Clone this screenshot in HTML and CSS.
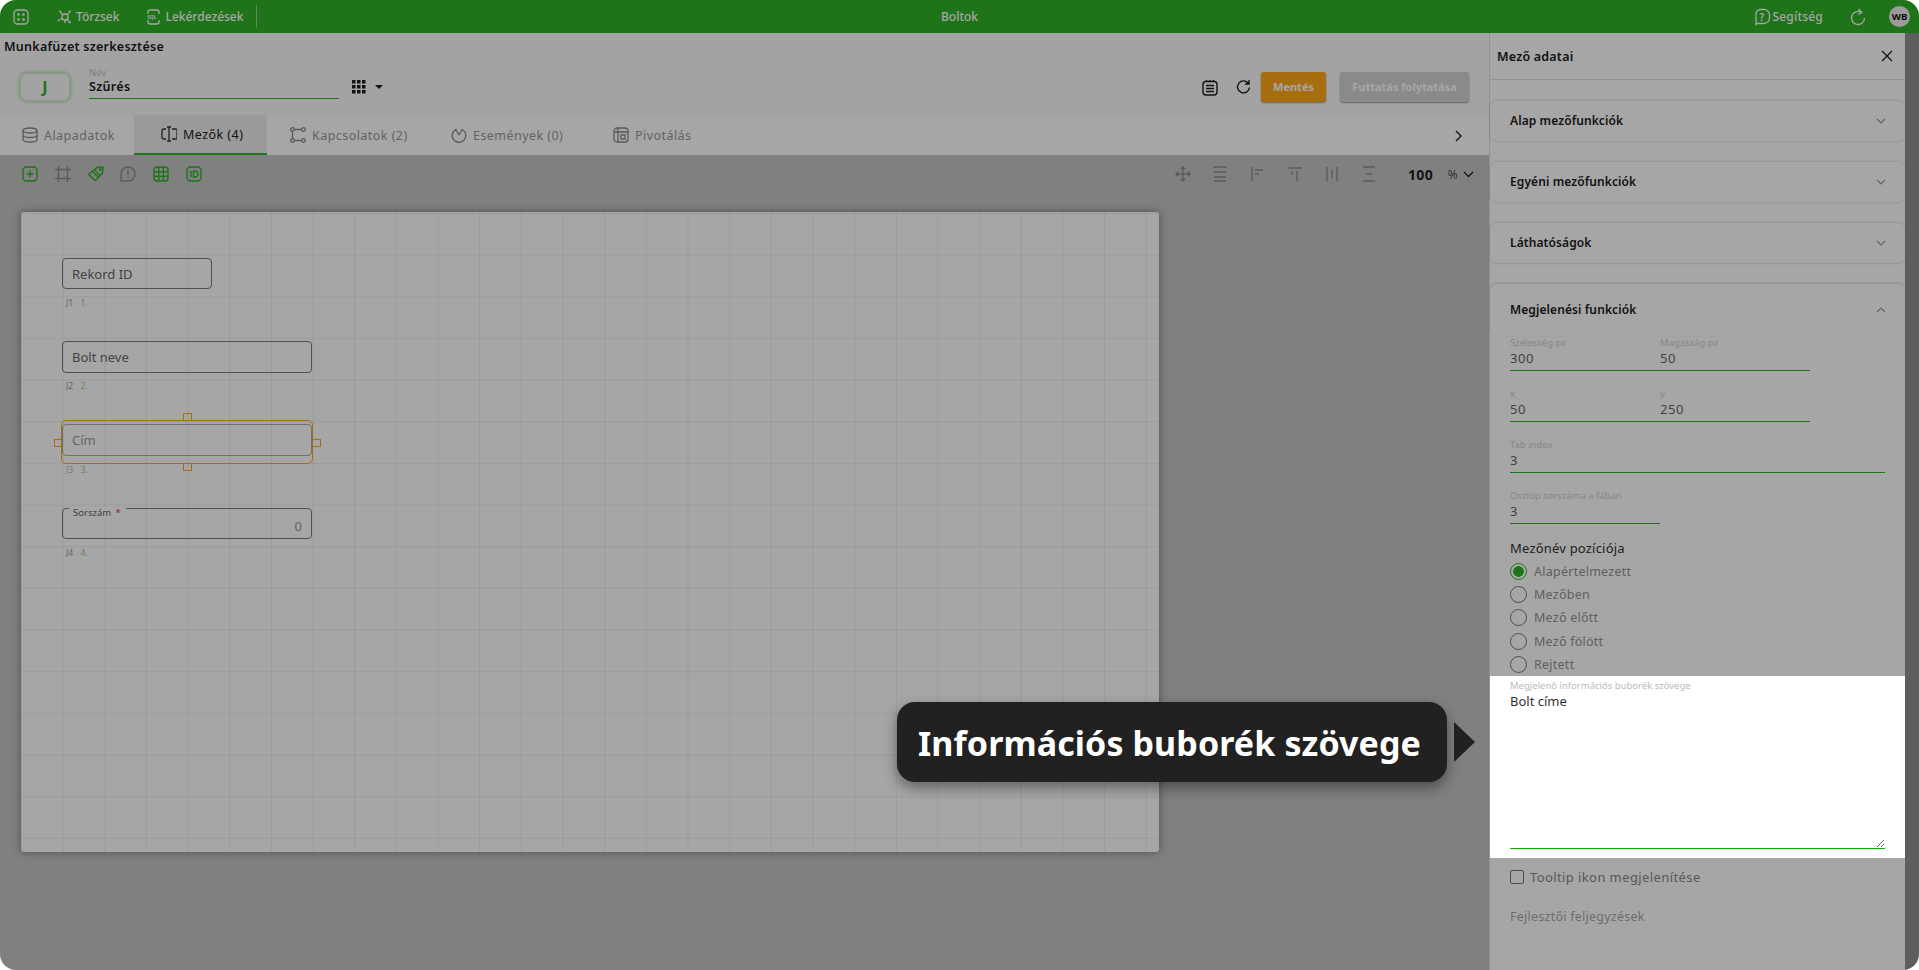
FILE: index.html
```html
<!DOCTYPE html>
<html>
<head>
    <title>Boltok</title>
    <link rel="stylesheet" href="styles.css">
</head>
<body>
<div class="app">
    <!-- top bar -->
    <header class="topbar">
        <svg class="ico-top" width="16" height="16" viewBox="0 0 16 16"><rect x="1" y="1" width="14" height="14" rx="3.5"/><g class="dots"><circle cx="5.5" cy="5.5" r="1.3"/><circle cx="10.5" cy="5.5" r="1.3"/><circle cx="5.5" cy="10.5" r="1.3"/><circle cx="10.5" cy="10.5" r="1.3"/></g></svg>
        <div class="top-item first">
            <svg class="ico-top" width="16" height="16" viewBox="0 0 16 16"><circle cx="8" cy="8" r="3"/><path d="M5.8 5.8 3.5 3M10.2 5.8 12.5 3M5.5 9.5 2.5 11M10.2 10.2 12.5 13M8 11v3"/><g class="dots"><circle cx="3" cy="2.5" r="1"/><circle cx="13" cy="2.5" r="1"/><circle cx="1.5" cy="11.5" r="1"/><circle cx="13" cy="13.5" r="1"/></g></svg>
            <span>Törzsek</span>
        </div>
        <div class="top-item second">
            <svg class="ico-top" width="13" height="16" viewBox="0 0 13 16"><path d="M1 5V3a2 2 0 0 1 2-2h7a2 2 0 0 1 2 2v2M1 11v2a2 2 0 0 0 2 2h7a2 2 0 0 0 2-2v-2"/><text class="sql" x="0.5" y="10">SQL</text></svg>
            <span>Lekérdezések</span>
        </div>
        <div class="top-divider"></div>
        <div class="top-title">Boltok</div>
        <div class="top-right">
            <svg class="ico-top" width="18" height="18" viewBox="0 0 18 18"><path d="M3 16.5V6a4.500 4.500 0 0 1 4.500-4.500h3A5.500 5.500 0 0 1 16.500 7v3a5.500 5.500 0 0 1-5.500 5.500H4z"/><text class="help" x="6.600" y="12.500">?</text></svg>
            <span class="help-text">Segítség</span>
            <svg class="ico-top reload" width="16" height="18" viewBox="0 0 16 18"><path d="M11.500 4.500A6.500 6.500 0 1 0 14.500 10M8.500 1 11.800 4.500 8 6.500"/></svg>
            <div class="avatar">WB</div>
        </div>
    </header>

    <div class="main">
        <section class="editor">
            <div class="edit-head">
                <div class="edit-title">Munkafüzet szerkesztése</div>
                <div class="edit-row">
                    <div class="letter-btn">J</div>
                    <div class="name-field">
                        <div class="name-label">Név</div>
                        <div class="name-value">Szűrés</div>
                    </div>
                    <svg class="grid-ico" width="14" height="14" viewBox="0 0 14 14"><path d="M0 0h3.500v3.500H0zM5 0h3.500v3.500H5zM10 0h3.500v3.500H10zM0 5h3.500v3.500H0zM5 5h3.500v3.500H5zM10 5h3.500v3.500H10zM0 10h3.500v3.500H0zM5 10h3.500v3.500H5zM10 10h3.500v3.500H10z"/></svg>
                    <div class="caret"></div>
                    <div class="edit-actions">
                        <svg class="ico-dark" width="16" height="17" viewBox="0 0 16 17"><rect x="1" y="2.500" width="14" height="13.500" rx="3"/><path d="M4.500 1v2M8 1v2M11.500 1v2M4 6.500h8M4 9.500h8M4 12.500h8"/></svg>
                        <svg class="ico-dark refresh" width="15" height="16" viewBox="0 0 15 16"><path d="M12.500 4.500A6 6 0 1 0 13.500 8.500M13 1v4H9"/></svg>
                        <div class="btn btn-save">Mentés</div>
                        <div class="btn btn-run">Futtatás folytatása</div>
                    </div>
                </div>
            </div>

            <nav class="tabs">
                <div class="tab tab-1">
                    <svg class="ico-tab" width="16" height="16" viewBox="0 0 16 16"><ellipse cx="8" cy="3.500" rx="7" ry="2.500"/><path d="M1 3.500v9c0 1.400 3.100 2.500 7 2.500s7-1.100 7-2.500v-9M1 8c0 1.400 3.100 2.500 7 2.500s7-1.100 7-2.500"/></svg>
                    <span>Alapadatok</span>
                </div>
                <div class="tab tab-2 active">
                    <svg class="ico-tab" width="16" height="16" viewBox="0 0 16 16"><path d="M5 3H2.500A1.500 1.500 0 0 0 1 4.500v7A1.500 1.500 0 0 0 2.500 13H5M11 3h3.500A1.500 1.500 0 0 1 16 4.500v7a1.500 1.500 0 0 1-1.500 1.500H11M8 1v14M6 1h4M6 15h4"/></svg>
                    <span>Mezők (4)</span>
                </div>
                <div class="tab tab-3">
                    <svg class="ico-tab" width="16" height="16" viewBox="0 0 16 16"><circle cx="2.500" cy="2.500" r="1.800"/><circle cx="13.500" cy="2.500" r="1.800"/><circle cx="2.500" cy="13.500" r="1.800"/><circle cx="13.500" cy="13.500" r="1.800"/><path d="M4.500 2.500h7M2.500 4.500v7M4.500 13.500h7"/></svg>
                    <span>Kapcsolatok (2)</span>
                </div>
                <div class="tab tab-4">
                    <svg class="ico-tab" width="16" height="16" viewBox="0 0 16 16"><path d="M5.500 2.200A6.800 6.800 0 1 0 12 3M8 8 5 3M8 8l3.500-6"/></svg>
                    <span>Események (0)</span>
                </div>
                <div class="tab tab-5">
                    <svg class="ico-tab" width="16" height="16" viewBox="0 0 16 16"><rect x="1" y="1" width="14" height="14" rx="3"/><path d="M1 5h14M5 1v14M8 8h4v4H8z"/></svg>
                    <span>Pivotálás</span>
                </div>
                <svg class="tab-next" width="9" height="12" viewBox="0 0 9 12"><path d="M2 1l5 5-5 5"/></svg>
            </nav>

            <div class="workspace">
                <div class="toolbar">
                    <svg class="tool green" viewBox="0 0 16 16"><rect x="1" y="1" width="14" height="14" rx="3.500"/><path d="M8 4.500v7M4.500 8h7"/></svg>
                    <svg class="tool" viewBox="0 0 16 16"><path d="M3.500 0v16M12.500 0v16M0 3.500h16M0 12.500h16"/></svg>
                    <svg class="tool green" viewBox="0 0 16 16"><path d="M9 1.500 15 1l-.5 6-7 7.500-7-6zM5 6l5 5M7 4.500l5 5"/><circle cx="12.300" cy="3.500" r=".8"/></svg>
                    <svg class="tool" viewBox="0 0 16 16"><path d="M1 15V8a7 7 0 1 1 7 7zM8 4v5M8 10.700v1.300"/></svg>
                    <svg class="tool green" viewBox="0 0 16 16"><rect x="1" y="1" width="14" height="14" rx="3"/><path d="M5.700 1v14M10.300 1v14M1 5.700h14M1 10.300h14"/></svg>
                    <svg class="tool green" viewBox="0 0 16 16"><rect x="1" y="1" width="14" height="14" rx="3.500"/><path d="M5 5v6M7.500 5v6h1.500a3 3 0 0 0 0-6z"/></svg>

                    <div class="tool-right">
                        <svg class="tool" viewBox="0 0 16 16"><path d="M8 1v14M1 8h14M5.800 3.200 8 1l2.200 2.200M5.800 12.800 8 15l2.200-2.200M3.200 5.800 1 8l2.200 2.200M12.800 5.800 15 8l-2.200 2.200"/></svg>
                        <svg class="tool" viewBox="0 0 16 16"><path d="M2 1h12M2 15h12M2 6h12M2 11h12M2 1v1M14 1v1"/></svg>
                        <svg class="tool" viewBox="0 0 16 16"><path d="M2 1v14M5 4h8M5 8h4"/></svg>
                        <svg class="tool" viewBox="0 0 16 16"><path d="M1 2h14M5 5v4M10 5v10"/></svg>
                        <svg class="tool" viewBox="0 0 16 16"><path d="M3 1v14M13 1v14M8 4v8"/></svg>
                        <svg class="tool" viewBox="0 0 16 16"><path d="M2 1h12M2 15h12M5 8h6"/></svg>
                        <span class="zoom-value">100</span>
                        <span class="zoom-unit">%</span>
                        <svg class="zoom-chev" width="11" height="7" viewBox="0 0 11 7"><path d="M1 1l4.500 4.500L10 1"/></svg>
                    </div>
                </div>

                <div class="canvas">
                    <div class="node node-short" style="left:41px;top:46px"><span>Rekord ID</span></div>
                    <div class="caption" style="left:45px;top:85px">J1 <b>1.</b></div>

                    <div class="node" style="left:41px;top:129px"><span>Bolt neve</span></div>
                    <div class="caption" style="left:45px;top:168px">J2 <b>2.</b></div>

                    <div class="selection" style="left:40px;top:208px">
                        <i class="handle h-top"></i><i class="handle h-bottom"></i><i class="handle h-left"></i><i class="handle h-right"></i>
                    </div>
                    <div class="node node-light" style="left:41px;top:212px"><span>Cím</span></div>
                    <div class="caption light" style="left:45px;top:252px">J3 <b>3.</b></div>

                    <div class="node node-num" style="left:41px;top:296px">
                        <div class="legend">Sorszám <em>*</em></div>
                        <span>0</span>
                    </div>
                    <div class="caption" style="left:45px;top:335px">J4 <b>4.</b></div>
                </div>
            </div>
        </section>

        <aside class="panel">
            <div class="panel-head">
                <span>Mező adatai</span>
                <svg class="close" width="12" height="12" viewBox="0 0 12 12"><path d="M1 1l10 10M11 1 1 11"/></svg>
            </div>
            <div class="card"><span>Alap mezőfunkciók</span><svg class="chev" width="10" height="6" viewBox="0 0 10 6"><path d="M1 1l4 4 4-4"/></svg></div>
            <div class="card"><span>Egyéni mezőfunkciók</span><svg class="chev" width="10" height="6" viewBox="0 0 10 6"><path d="M1 1l4 4 4-4"/></svg></div>
            <div class="card"><span>Láthatóságok</span><svg class="chev" width="10" height="6" viewBox="0 0 10 6"><path d="M1 1l4 4 4-4"/></svg></div>
            <div class="card card-open"><span>Megjelenési funkciók</span><svg class="chev" width="10" height="6" viewBox="0 0 10 6"><path d="M1 5l4-4 4 4"/></svg></div>

            <div class="form">
                <div class="form-row">
                    <div class="field half"><label>Szélesség px</label><div class="value">300</div></div>
                    <div class="field half"><label>Magasság px</label><div class="value">50</div></div>
                </div>
                <div class="form-row">
                    <div class="field half"><label>x</label><div class="value">50</div></div>
                    <div class="field half"><label>y</label><div class="value">250</div></div>
                </div>
                <div class="form-row">
                    <div class="field full"><label>Tab index</label><div class="value">3</div></div>
                </div>
                <div class="form-row">
                    <div class="field half"><label>Oszlop sorszáma a fában</label><div class="value">3</div></div>
                </div>

                <div class="group-title">Mezőnév pozíciója</div>
                <div class="radios">
                    <div class="radio checked"><i></i>Alapértelmezett</div>
                    <div class="radio"><i></i>Mezőben</div>
                    <div class="radio"><i></i>Mező előtt</div>
                    <div class="radio"><i></i>Mező fölött</div>
                    <div class="radio"><i></i>Rejtett</div>
                </div>
            </div>

            <div class="spot">
                <div class="spot-mask"></div>
                <label class="spot-label">Megjelenő információs buborék szövege</label>
                <textarea class="spot-text" readonly>Bolt címe</textarea>
            </div>

            <div class="check"><i></i>Tooltip ikon megjelenítése</div>
            <div class="notes">Fejlesztői feljegyzések</div>
        </aside>
        <div class="scroll-strip"></div>
    </div>

    <!-- tour bubble -->
    <div class="tour">
        <div class="tour-bubble">Információs buborék szövege</div>
        <div class="tour-arrow"></div>
    </div>
</div>
</body>
</html>
```

FILE: styles.css
```css
* {
    box-sizing: border-box;
}

html, body {
    margin: 0;
    height: 100%;
    background-color: #fff;
    overflow: hidden;
}

body {
    font-family: "Noto Sans", "Open Sans", sans-serif;
    color: #1c1c1c;
}

.app {
    position: relative;
    width: 1919px;
    height: 970px;
    display: flex;
    flex-direction: column;
    overflow: hidden;
    border-radius: 16px;
    background-color: #fff;
}

/* top bar */
.topbar {
    flex: 0 0 33px;
    display: flex;
    align-items: center;
    padding-left: 13px;
    background-color: #30b125;
    color: #fff;
    font-size: 12px;
    font-weight: 500;
}

.ico-top {
    flex: none;
    fill: none;
    stroke: #fff;
    stroke-width: 1.3;
}

.ico-top .dots {
    fill: #fff;
    stroke: none;
}

.ico-top .sql {
    fill: #fff;
    stroke: none;
    font-size: 4.6px;
    font-weight: 700;
}

.ico-top .help {
    fill: #fff;
    stroke: none;
    font-size: 10px;
    font-weight: 600;
}

.top-item {
    display: flex;
    align-items: center;
    gap: 3px;
}

.top-item.first {
    margin-left: 28px;
}

.top-item.second {
    margin-left: 28px;
    gap: 5px;
}

.top-divider {
    width: 1px;
    height: 23px;
    margin-left: 13px;
    background-color: #8fd488;
}

.top-title {
    position: absolute;
    left: 0;
    right: 0;
    text-align: center;
    pointer-events: none;
}

.top-right {
    margin-left: auto;
    margin-right: 9px;
    display: flex;
    align-items: center;
}

.help-text {
    margin-left: 1px;
    margin-right: 27px;
    letter-spacing: 0.2px;
}

.avatar {
    width: 21px;
    height: 21px;
    margin-left: 23px;
    border-radius: 50%;
    background-color: #eee;
    color: #111;
    font-size: 9.5px;
    font-weight: 700;
    line-height: 21px;
    text-align: center;
}

/* main area */
.main {
    flex: 1;
    display: flex;
    min-height: 0;
}

.editor {
    flex: 0 0 1489px;
    display: flex;
    flex-direction: column;
}

.edit-head {
    height: 82px;
    background-color: #fbfbfb;
}

.edit-title {
    padding: 6px 0 0 4px;
    font-size: 12.5px;
    line-height: 16px;
    font-weight: 600;
    letter-spacing: 0.25px;
}

.edit-row {
    display: flex;
    align-items: center;
    margin-top: 17px;
    padding-left: 20px;
    height: 30px;
}

.letter-btn {
    width: 50px;
    height: 28px;
    border-radius: 7px;
    background-color: #fbfbfb;
    border: 1px solid #dcefd9;
    box-shadow: 0 0 4px #7fcf77;
    color: #30b125;
    font-weight: 700;
    font-size: 16px;
    line-height: 26px;
    text-align: center;
}

.name-field {
    width: 250px;
    margin-left: 19px;
    margin-top: -9px;
    padding-bottom: 3px;
    border-bottom: 1px solid #30b125;
}

.name-label {
    font-size: 9.5px;
    line-height: 11px;
    color: #c4c4c4;
}

.name-value {
    font-size: 12.5px;
    line-height: 17px;
    font-weight: 600;
    letter-spacing: 0.3px;
}

.grid-ico {
    margin-left: 13px;
    fill: #1c1c1c;
}

.caret {
    width: 0;
    height: 0;
    margin-left: 9px;
    border-left: 4px solid transparent;
    border-right: 4px solid transparent;
    border-top: 4px solid #1c1c1c;
}

.edit-actions {
    margin-left: auto;
    margin-right: 20px;
    display: flex;
    align-items: center;
}

.ico-dark {
    fill: none;
    stroke: #1c1c1c;
    stroke-width: 1.4;
}

.refresh {
    margin-left: 18px;
    margin-right: 10px;
}

.btn {
    height: 30px;
    border-radius: 3px;
    color: #fff;
    font-size: 11px;
    font-weight: 700;
    line-height: 30px;
    text-align: center;
    box-shadow: 0 1px 2px rgba(0, 0, 0, 0.4);
}

.btn-save {
    width: 65px;
    background-color: #ffaa18;
}

.btn-run {
    width: 129px;
    margin-left: 14px;
    background-color: #d5d5d5;
}

/* tabs */
.tabs {
    height: 40px;
    display: flex;
    align-items: stretch;
    position: relative;
    background-color: #fff;
    font-size: 12.5px;
    letter-spacing: 0.45px;
    color: #999;
}

.tab {
    display: flex;
    align-items: center;
    gap: 6px;
    padding-left: 22px;
}

.tab-1 { width: 134px; }
.tab-2 { width: 133px; padding-left: 27px; }
.tab-3 { width: 161px; padding-left: 23px; }
.tab-4 { width: 162px; padding-left: 23px; }
.tab-5 { padding-left: 23px; }

.tab.active {
    background-color: #ededed;
    border-bottom: 2px solid #30b125;
    color: #1c1c1c;
}

.ico-tab {
    flex: none;
    fill: none;
    stroke: #8a8a8a;
    stroke-width: 1.3;
}

.active .ico-tab {
    stroke: #333;
}

.tab-next {
    position: absolute;
    right: 26px;
    top: 15px;
    fill: none;
    stroke: #1c1c1c;
    stroke-width: 1.4;
}

/* workspace */
.workspace {
    flex: 1;
    background-color: #c5c5c5;
    padding: 0 0 0 21px;
}

.toolbar {
    height: 57px;
    display: flex;
    align-items: flex-start;
    gap: 16.8px;
    padding: 11px 15px 0 1px;
}

.tool {
    flex: none;
    width: 16px;
    height: 16px;
    fill: none;
    stroke: #8c8c8c;
    stroke-width: 1.4;
}

.tool.green {
    stroke: #30b125;
}

.tool-right {
    margin-left: auto;
    display: flex;
    align-items: center;
    gap: 21.2px;
    height: 16px;
}

.zoom-value {
    margin-left: 9.5px;
    font-size: 14px;
    font-weight: 700;
    letter-spacing: 0.4px;
}

.zoom-unit {
    margin-left: -6.5px;
    font-size: 12px;
    color: #555;
}

.zoom-chev {
    margin-left: -16px;
    fill: none;
    stroke: #1c1c1c;
    stroke-width: 1.3;
}

.canvas {
    position: relative;
    width: 1138px;
    height: 640px;
    border-radius: 3px;
    background-color: #fff;
    background-image:
        linear-gradient(to right, rgba(0, 0, 0, 0.06) 1px, transparent 1px),
        linear-gradient(to bottom, rgba(0, 0, 0, 0.06) 1px, transparent 1px);
    background-size: 41.67px 41.67px;
    background-position: 0 1px;
    box-shadow: 0 0 8px rgba(0, 0, 0, 0.4);
}

.node {
    position: absolute;
    width: 250px;
    height: 32px;
    display: flex;
    align-items: center;
    padding-left: 9px;
    border: 1px solid #7c7c7c;
    border-radius: 4px;
    font-size: 13px;
    color: #666;
}

.node-short {
    width: 150px;
    height: 31px;
}

.node-light {
    border-color: #aaa;
    color: #999;
}

.node-num {
    height: 31px;
    justify-content: flex-end;
    padding: 4px 9px 0 0;
    color: #999;
}

.legend {
    position: absolute;
    left: 6px;
    top: -2px;
    padding: 0 5px 0 4px;
    background-color: #fff;
    font-size: 9.5px;
    line-height: 12px;
    color: #666;
}

.legend em {
    color: #e03030;
    font-style: normal;
    margin-left: 2px;
}

.caption {
    position: absolute;
    font-size: 8.5px;
    line-height: 12px;
    color: #999;
}

.caption b {
    margin-left: 5px;
    font-weight: 400;
    color: #8fd488;
}

.caption.light {
    color: #bbb;
}

.selection {
    position: absolute;
    width: 252px;
    height: 44px;
    border: 1px solid #ffaa18;
    border-radius: 5px;
}

.handle {
    position: absolute;
    width: 9px;
    height: 8px;
    border: 1px solid #ffaa18;
}

.h-top { left: 121px; top: -8px; }
.h-bottom { left: 121px; bottom: -8px; }
.h-left { left: -8px; top: 18px; }
.h-right { right: -9px; top: 18px; }

/* right panel */
.panel {
    flex: 0 0 416px;
    height: 100%;
    background-color: #fff;
    border-left: 1px solid #e0e0e0;
}

.panel-head {
    height: 47px;
    display: flex;
    align-items: center;
    justify-content: space-between;
    padding: 0 12px 0 7px;
    border-bottom: 1px solid #e0e0e0;
    font-size: 12.5px;
    font-weight: 600;
    letter-spacing: 0.2px;
}

.close {
    fill: none;
    stroke: #1c1c1c;
    stroke-width: 1.3;
}

.card {
    height: 40px;
    margin-top: 21px;
    display: flex;
    align-items: center;
    justify-content: space-between;
    padding: 0 19px 1px 20px;
    border-radius: 7px;
    box-shadow: 0 0 3px rgba(0, 0, 0, 0.22);
    font-size: 12px;
    font-weight: 600;
    letter-spacing: 0.1px;
}

.card-open {
    height: 52px;
    box-shadow: 0 -1px 3px rgba(0, 0, 0, 0.16);
}

.chev {
    fill: none;
    stroke: #999;
    stroke-width: 1.1;
}

.form {
    padding-left: 20px;
}

.form-row {
    display: flex;
    margin-bottom: 16px;
}

.field {
    height: 35px;
    border-bottom: 1px solid #30b125;
}

.half { width: 150px; }
.full { width: 375px; }

.field label {
    display: block;
    font-size: 9.5px;
    line-height: 14px;
    color: #cfcfcf;
}

.value {
    font-size: 13px;
    line-height: 17px;
    letter-spacing: 0.6px;
    color: #666;
}

.group-title {
    margin-top: -2px;
    font-size: 13px;
    line-height: 20px;
    letter-spacing: 0.2px;
    color: #333;
}

.radios {
    height: 118px;
    padding-top: 1.6px;
}

.radio {
    display: flex;
    align-items: center;
    gap: 7px;
    height: 23.3px;
    font-size: 12.5px;
    letter-spacing: 0.25px;
    color: #939393;
}

.radio i {
    width: 17px;
    height: 17px;
    border: 1px solid #777;
    border-radius: 50%;
}

.radio.checked i {
    border-color: #30b125;
    background: radial-gradient(circle, #30b125 0 5px, transparent 5.500px);
}

/* highlighted field, the mask dims everything around it */
.spot {
    position: relative;
    height: 182px;
    padding: 3px 20px 0;
    background-color: #fff;
}

.spot-mask {
    position: absolute;
    inset: 0;
    box-shadow: 0 0 0 3000px rgba(0, 0, 0, 0.35);
    pointer-events: none;
}

.spot-label {
    display: block;
    margin-bottom: -2px;
    font-size: 9.5px;
    line-height: 14px;
    color: #bbb;
}

.spot-text {
    display: block;
    width: 375px;
    height: 158px;
    padding: 0;
    border: none;
    border-bottom: 1px solid #15b000;
    outline: none;
    resize: vertical;
    font-family: inherit;
    font-size: 13px;
    line-height: 20px;
    color: #333;
}

.check {
    display: flex;
    align-items: center;
    gap: 6px;
    height: 14px;
    margin: 12px 0 0 20px;
    font-size: 13px;
    letter-spacing: 0.4px;
    color: #888;
}

.check i {
    width: 14px;
    height: 14px;
    border: 1px solid #777;
    border-radius: 2px;
}

.notes {
    margin: 23px 0 0 20px;
    font-size: 12.5px;
    line-height: 20px;
    letter-spacing: 0.25px;
    color: #aaa;
}

.scroll-strip {
    flex: 1;
    background-color: #919191;
}

/* tour bubble */
.tour {
    position: absolute;
    left: 897px;
    top: 702px;
    display: flex;
    align-items: center;
    gap: 7px;
}

.tour-bubble {
    width: 550px;
    height: 80px;
    padding-left: 21px;
    border-radius: 18px;
    background-color: #212121;
    box-shadow: 0 6px 14px rgba(0, 0, 0, 0.4);
    color: #fff;
    font-size: 34px;
    font-weight: 700;
    line-height: 82px;
    letter-spacing: 0.1px;
    white-space: nowrap;
}

.tour-arrow {
    width: 0;
    height: 0;
    border-left: 21px solid #212121;
    border-top: 20px solid transparent;
    border-bottom: 20px solid transparent;
}
```
